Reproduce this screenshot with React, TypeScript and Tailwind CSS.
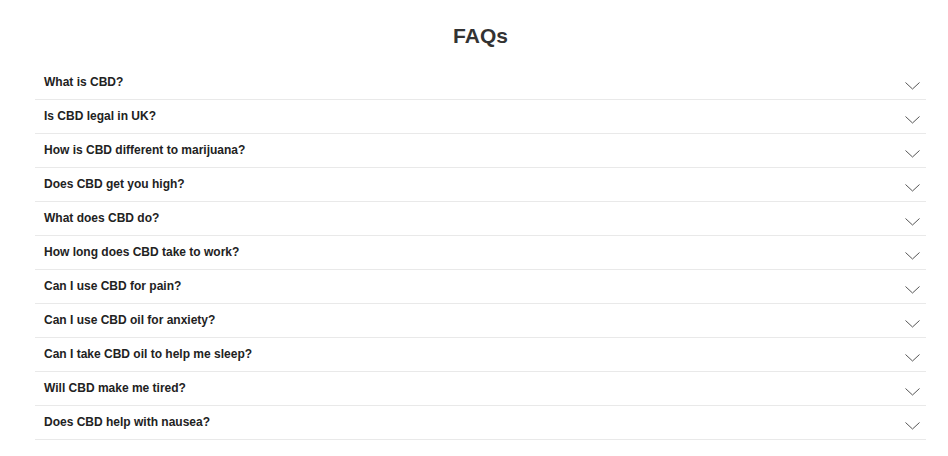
const faqs = [
  "What is CBD?",
  "Is CBD legal in UK?",
  "How is CBD different to marijuana?",
  "Does CBD get you high?",
  "What does CBD do?",
  "How long does CBD take to work?",
  "Can I use CBD for pain?",
  "Can I use CBD oil for anxiety?",
  "Can I take CBD oil to help me sleep?",
  "Will CBD make me tired?",
  "Does CBD help with nausea?",
];

const Chevron = () => (
  <svg className="mt-[6px] h-[8px] w-[15px]" viewBox="0 0 15 8" fill="none" stroke="#555" strokeWidth="1">
    <polyline points="0.5,0.5 7.5,7 14.5,0.5" />
  </svg>
);

const App = () => {
  return (
    <div className="min-h-screen bg-white font-['Liberation_Sans',Arial,sans-serif] text-[#222]">
      <div className="ml-[35px] w-[891px] pt-[24px]">
        <h2 className="text-center text-[21px] font-bold leading-[24px] text-[#333]">FAQs</h2>

        {/* Questions */}
        <div className="mt-[18px]">
          {faqs.map((q) => (
            <div key={q} className="flex h-[34px] items-center justify-between border-b border-[#e9e9e9] pl-[9px] pr-[6px]">
              <span className="mb-[2px] text-[12px] font-bold">{q}</span>
              <Chevron />
            </div>
          ))}
        </div>
      </div>
    </div>
  );
};

export default App;
